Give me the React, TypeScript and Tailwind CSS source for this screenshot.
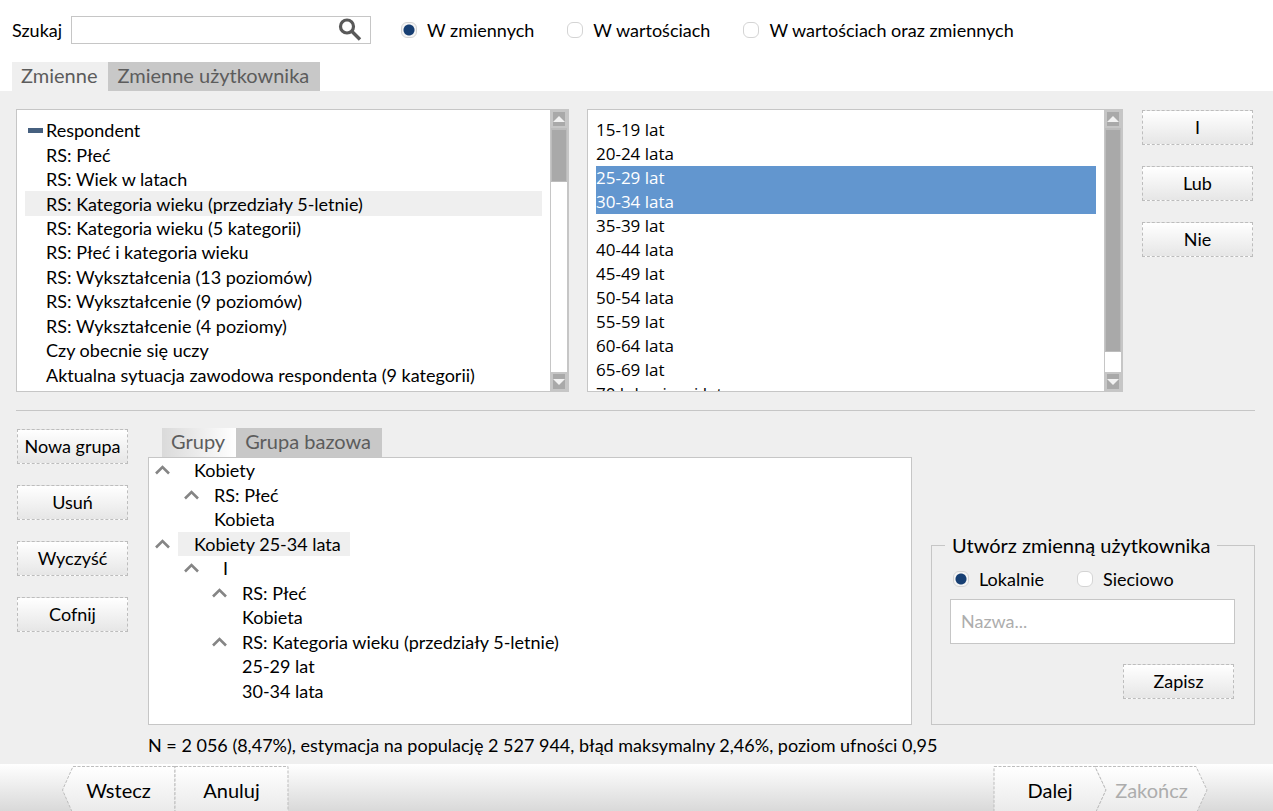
import { useState } from "react";
import type { ReactNode } from "react";

const variables = [
  "RS: Płeć",
  "RS: Wiek w latach",
  "RS: Kategoria wieku (przedziały 5-letnie)",
  "RS: Kategoria wieku (5 kategorii)",
  "RS: Płeć i kategoria wieku",
  "RS: Wykształcenia (13 poziomów)",
  "RS: Wykształcenie (9 poziomów)",
  "RS: Wykształcenie (4 poziomy)",
  "Czy obecnie się uczy",
  "Aktualna sytuacja zawodowa respondenta (9 kategorii)",
];

const values = [
  "15-19 lat",
  "20-24 lata",
  "25-29 lat",
  "30-34 lata",
  "35-39 lat",
  "40-44 lata",
  "45-49 lat",
  "50-54 lata",
  "55-59 lat",
  "60-64 lata",
  "65-69 lat",
  "70 lub więcej lat",
];

type TreeRow = { label: string; pad: string; arrow?: boolean; selected?: boolean; inset?: string };

const groups: TreeRow[] = [
  { label: "Kobiety", pad: "pl-[6px]", arrow: true, inset: "pl-4" },
  { label: "RS: Płeć", pad: "pl-[35px]", arrow: true, inset: "pl-[7px]" },
  { label: "Kobieta", pad: "pl-[35px]", inset: "pl-[7px]" },
  { label: "Kobiety 25-34 lata", pad: "pl-[6px]", arrow: true, selected: true, inset: "pl-4" },
  { label: "I", pad: "pl-[35px]", arrow: true, inset: "pl-4" },
  { label: "RS: Płeć", pad: "pl-[63px]", arrow: true, inset: "pl-[7px]" },
  { label: "Kobieta", pad: "pl-[63px]", inset: "pl-[7px]" },
  { label: "RS: Kategoria wieku (przedziały 5-letnie)", pad: "pl-[63px]", arrow: true, inset: "pl-[7px]" },
  { label: "25-29 lat", pad: "pl-[63px]", inset: "pl-[7px]" },
  { label: "30-34 lata", pad: "pl-[63px]", inset: "pl-[7px]" },
];

function Radio({ name, label, defaultChecked }: { name: string; label: string; defaultChecked?: boolean }) {
  return (
    <label className="flex items-center gap-[10px]">
      <input
        type="radio"
        name={name}
        defaultChecked={defaultChecked}
        className="size-4 appearance-none rounded-[6px] border border-[#d4d4d4] bg-white checked:bg-[radial-gradient(circle,#173f73_5px,#f4f4f4_6px)]"
      />
      {label}
    </label>
  );
}

function Button({ children }: { children: ReactNode }) {
  return (
    <button
      type="button"
      className="h-[35px] w-[111px] shrink-0 border border-dashed border-[#bdbdbd] bg-linear-to-b from-white to-[#e6e6e6] pb-[2px] whitespace-nowrap"
    >
      {children}
    </button>
  );
}

function Tab({ children, className }: { children: ReactNode; className: string }) {
  return (
    <button type="button" role="tab" className={`h-[29px] pr-[11px] pb-[2px] pl-[9px] text-[20px] leading-[27px] text-[#5c5c5c] ${className}`}>
      {children}
    </button>
  );
}

function ScrollBar({ thumb }: { thumb: string }) {
  return (
    <div className="flex w-[18px] shrink-0 flex-col border-x border-[#c6c6c6] bg-white">
      <button type="button" aria-label="W górę" className="flex h-[18px] items-center justify-center border-2 border-[#c6c6c6] bg-[#a9a9a9]">
        <svg width="12" height="6" viewBox="0 0 12 6" fill="#f2f2f2" className="shrink-0">
          <path d="M0 6 6 0l6 6z" />
        </svg>
      </button>
      <div className={`border border-t-2 border-[#bcbcbc] bg-[#a9a9a9] ${thumb}`} />
      <div className="flex-1" />
      <button type="button" aria-label="W dół" className="flex h-[19px] items-center justify-center border-2 border-[#c6c6c6] bg-[#a9a9a9]">
        <svg width="12" height="6" viewBox="0 0 12 6" fill="#f2f2f2" className="shrink-0">
          <path d="M0 0h12L6 6z" />
        </svg>
      </button>
    </div>
  );
}

type StepProps = { label: string; shape: string; viewBox: string; className: string; disabled?: boolean };

function StepButton({ label, shape, viewBox, className, disabled }: StepProps) {
  return (
    <button type="button" disabled={disabled} className={`relative h-12 shrink-0 text-[20px] disabled:text-[#adadad] ${className}`}>
      <svg className="absolute inset-0 size-full overflow-visible" viewBox={viewBox}>
        <defs>
          <linearGradient id="step" x2="0" y2="1">
            <stop stopColor="#fff" />
            <stop offset="1" stopColor="#e9e9e9" />
          </linearGradient>
        </defs>
        <path d={shape} fill="url(#step)" stroke="#bdbdbd" strokeDasharray="3 1.500" />
      </svg>
      <span className="relative">{label}</span>
    </button>
  );
}

export default function App() {
  const [selected, setSelected] = useState(["25-29 lat", "30-34 lata"]);
  const [current, setCurrent] = useState(variables[2]);

  function toggle(value: string) {
    setSelected((prev) => (prev.includes(value) ? prev.filter((v) => v !== value) : [...prev, value]));
  }

  return (
    <div className="flex min-h-screen flex-col overflow-hidden bg-white font-['Lato','Open_Sans',sans-serif] text-[18px] leading-6 text-black">
      <header className="px-3 pt-4">
        <div className="flex h-7 items-center">
          <label htmlFor="search" className="w-[59px]">
            Szukaj
          </label>
          <div className="flex h-7 w-[300px] items-center border border-[#c6c6c6] bg-white pr-[7px]">
            <input id="search" type="text" className="h-full min-w-0 flex-1 px-2 outline-none" />
            <button type="button" aria-label="Szukaj">
              <svg width="26" height="26" viewBox="0 0 26 26" fill="none" stroke="#595959">
                <circle cx="10" cy="9.500" r="6.500" strokeWidth="3.200" />
                <path d="m15 14.500 8 8" strokeWidth="3.400" />
              </svg>
            </button>
          </div>
          <div className="ml-[30px] flex gap-[33px]">
            <Radio name="scope" label="W zmiennych" defaultChecked />
            <Radio name="scope" label="W wartościach" />
            <Radio name="scope" label="W wartościach oraz zmiennych" />
          </div>
        </div>
        <div role="tablist" className="mt-[18px] flex">
          <Tab className="bg-[#efefef]">Zmienne</Tab>
          <Tab className="bg-[#c8c8c8]">Zmienne użytkownika</Tab>
        </div>
      </header>

      <main className="flex-1 bg-[#efefef] pt-[18px] pr-[18px] pl-4">
        <div className="flex pr-[2px]">
          <div className="flex h-[283px] min-w-0 flex-[553] border border-[#c6c6c6] bg-white">
            <ul className="mr-2 ml-2 flex h-[277px] min-w-0 flex-1 flex-col pt-2">
              <li className="flex flex-1 items-center gap-[3px] pl-[3px]">
                <span className="h-[5px] w-[15px] bg-[#46607f]" />
                Respondent
              </li>
              {variables.map((v) => (
                <li
                  key={v}
                  onClick={() => setCurrent(v)}
                  className={`flex flex-1 items-center pl-[21px] whitespace-nowrap ${v === current ? "bg-[#efefef]" : ""}`}
                >
                  {v}
                </li>
              ))}
            </ul>
            <ScrollBar thumb="h-[54px]" />
          </div>

          <div className="ml-[18px] flex h-[283px] min-w-0 flex-[536] overflow-hidden border border-[#c6c6c6] bg-white">
            <ul role="listbox" aria-multiselectable="true" className="mr-2 ml-2 min-w-0 flex-1 pt-2 font-['Open_Sans',sans-serif] text-[17px] leading-6">
              {values.map((v) => (
                <li
                  key={v}
                  role="option"
                  aria-selected={selected.includes(v)}
                  onClick={() => toggle(v)}
                  className="h-6 aria-selected:bg-[#6296cf] aria-selected:text-white"
                >
                  {v}
                </li>
              ))}
            </ul>
            <ScrollBar thumb="h-[224px]" />
          </div>

          <div className="ml-[19px] flex flex-col gap-[21px] pt-px">
            <Button>I</Button>
            <Button>Lub</Button>
            <Button>Nie</Button>
          </div>
        </div>

        <hr className="mt-[18px] border-[#c6c6c6]" />

        <div className="mt-[17px] flex">
          <div className="flex flex-col gap-[21px] pt-px pl-px">
            <Button>Nowa grupa</Button>
            <Button>Usuń</Button>
            <Button>Wyczyść</Button>
            <Button>Cofnij</Button>
          </div>

          <div className="ml-5 min-w-0 flex-1">
            <div role="tablist" className="flex pl-[14px]">
              <Tab className="bg-linear-to-r from-[#dadada] to-white">Grupy</Tab>
              <Tab className="bg-[#c8c8c8]">Grupa bazowa</Tab>
            </div>
            <div className="h-[268px] border border-[#c6c6c6] bg-white">
              <ul className="flex h-[245px] flex-col">
                {groups.map((g, i) => (
                  <li key={i} className={`flex flex-1 items-center whitespace-nowrap ${g.pad}`}>
                    <span className="w-[23px]">
                      {g.arrow && (
                        <svg width="15" height="10" viewBox="0 0 15 10" fill="none" stroke="#858585" strokeWidth="2.600">
                          <path d="m1 8.500 6.500-6.500L14 8.500" />
                        </svg>
                      )}
                    </span>
                    <span className={`h-6 pr-[9px] ${g.inset} ${g.selected ? "bg-[#efefef]" : ""}`}>{g.label}</span>
                  </li>
                ))}
              </ul>
            </div>
          </div>

          <fieldset className="ml-[19px] w-[324px] self-end border border-[#c6c6c6] pr-[19px] pb-[25px] pl-[18px]">
            <legend className="-ml-[5px] px-[7px] text-[20px] leading-6 whitespace-nowrap">Utwórz zmienną użytkownika</legend>
            <div className="flex gap-[33px] pt-[10px] pl-[3px]">
              <Radio name="target" label="Lokalnie" defaultChecked />
              <Radio name="target" label="Sieciowo" />
            </div>
            <input
              type="text"
              aria-label="Nazwa"
              placeholder="Nazwa..."
              className="mt-2 h-[45px] w-full border border-[#c6c6c6] bg-white px-[10px] pb-[2px] outline-none placeholder:text-[#adadad]"
            />
            <div className="mt-5 flex justify-end pr-px">
              <Button>Zapisz</Button>
            </div>
          </fieldset>
        </div>

        <p className="mt-2 mb-[7px] ml-[132px] whitespace-nowrap">
          N = 2 056 (8,47%), estymacja na populację 2 527 944, błąd maksymalny 2,46%, poziom ufności 0,95
        </p>
      </main>

      <footer className="flex h-[47px] justify-between overflow-hidden bg-linear-to-b from-white to-[#d9d9d9] pt-[2px] pr-[66px] pl-[62px]">
        <div className="flex">
          <StepButton label="Wstecz" className="w-[113px]" viewBox="0 0 113 48" shape="M113 .5H11L.5 24 11 48H113z" />
          <StepButton label="Anuluj" className="w-[113px]" viewBox="0 0 113 48" shape="M0 .5H113V48H0z" />
        </div>
        <div className="flex">
          <StepButton label="Dalej" className="w-[112px]" viewBox="0 0 112 48" shape="M0 .5H101L112 24 101 48H0z" />
          <StepButton
            label="Zakończ"
            className="w-[101px] pr-[10px]"
            viewBox="0 0 101 48"
            shape="M-11 .5H90L101 24 90 48H-11L0 24z"
            disabled
          />
        </div>
      </footer>
    </div>
  );
}
